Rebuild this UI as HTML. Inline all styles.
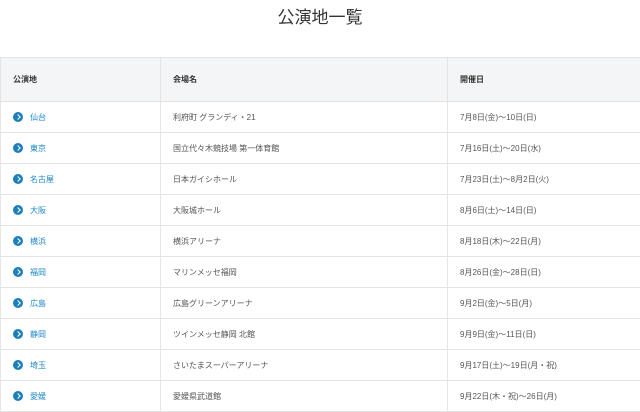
<!DOCTYPE html>
<html><head><meta charset="utf-8"><style>
body{margin:0;width:640px;height:410px;overflow:hidden;background:#fff;font-family:"Liberation Sans","Noto Sans CJK JP",sans-serif;}
h1{margin:0;position:absolute;top:6px;width:640px;text-align:center;font-size:17px;font-weight:normal;color:#333;line-height:24px}
table{position:absolute;top:57px;left:0;width:641px;border-collapse:collapse;font-size:8px;color:#555}
th,td{border:1px solid #e4e4e4;text-align:left;padding:0 0 0 12px}
th{background:#f4f5f6;height:43px;font-weight:bold;color:#333}
td{height:30px}
td:first-child{color:#1f88c4;padding-left:12px}
.i{display:inline-block;width:10px;height:10px;border-radius:50%;background:#1c7fbc;vertical-align:middle;margin-right:7px;position:relative}
.i:after{content:"";position:absolute;left:2.5px;top:3px;width:3px;height:3px;border-top:1.3px solid #fff;border-right:1.3px solid #fff;transform:rotate(45deg)}
</style></head><body>
<h1>公演地一覧</h1>
<table>
<colgroup><col style="width:160px"><col style="width:287px"><col></colgroup>
<tr><th>公演地</th><th>会場名</th><th>開催日</th></tr>
<tr><td><span class="i"></span>仙台</td><td>利府町 グランディ・21</td><td>7月8日(金)〜10日(日)</td></tr>
<tr><td><span class="i"></span>東京</td><td>国立代々木競技場 第一体育館</td><td>7月16日(土)〜20日(水)</td></tr>
<tr><td><span class="i"></span>名古屋</td><td>日本ガイシホール</td><td>7月23日(土)〜8月2日(火)</td></tr>
<tr><td><span class="i"></span>大阪</td><td>大阪城ホール</td><td>8月6日(土)〜14日(日)</td></tr>
<tr><td><span class="i"></span>横浜</td><td>横浜アリーナ</td><td>8月18日(木)〜22日(月)</td></tr>
<tr><td><span class="i"></span>福岡</td><td>マリンメッセ福岡</td><td>8月26日(金)〜28日(日)</td></tr>
<tr><td><span class="i"></span>広島</td><td>広島グリーンアリーナ</td><td>9月2日(金)〜5日(月)</td></tr>
<tr><td><span class="i"></span>静岡</td><td>ツインメッセ静岡 北館</td><td>9月9日(金)〜11日(日)</td></tr>
<tr><td><span class="i"></span>埼玉</td><td>さいたまスーパーアリーナ</td><td>9月17日(土)〜19日(月・祝)</td></tr>
<tr><td><span class="i"></span>愛媛</td><td>愛媛県武道館</td><td>9月22日(木・祝)〜26日(月)</td></tr>
</table>
</body></html>
